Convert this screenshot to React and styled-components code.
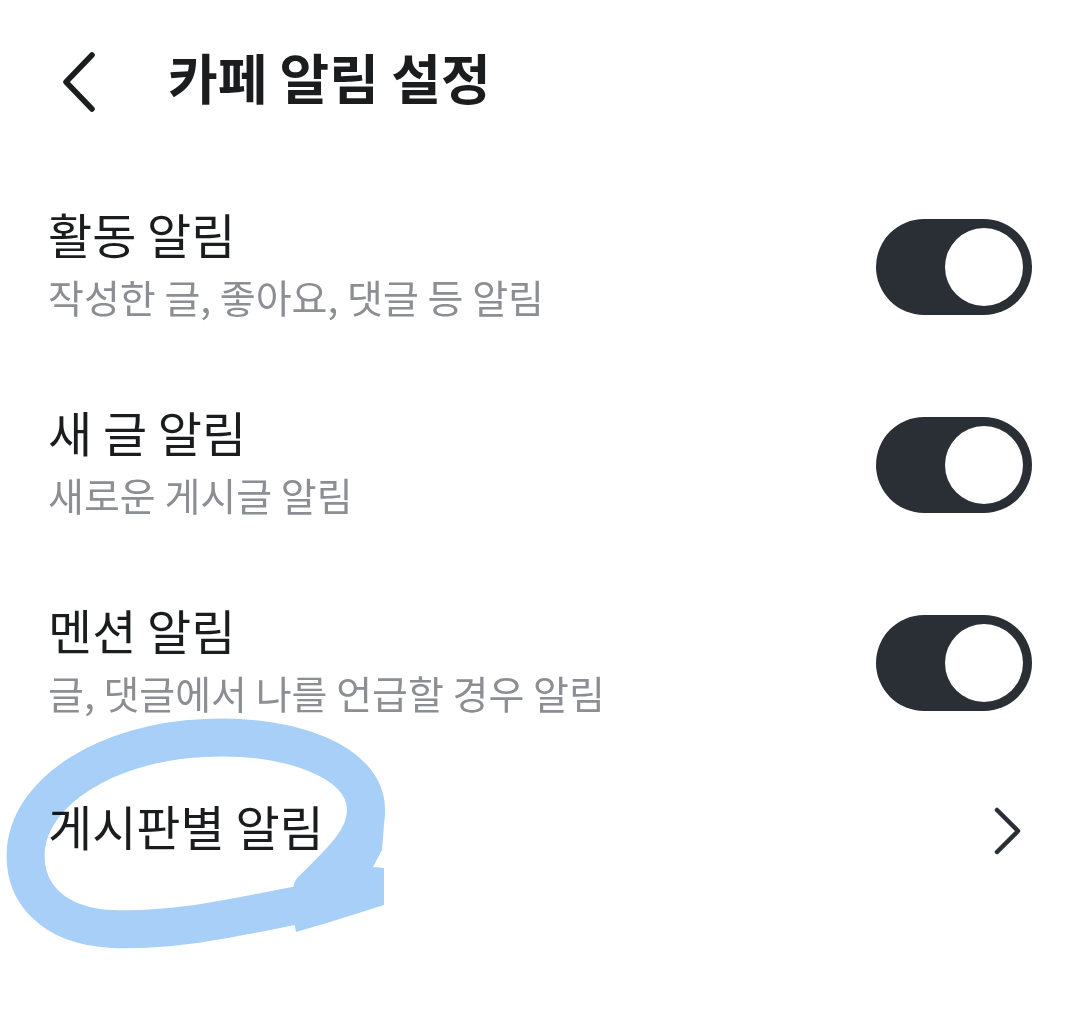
import React, { useState } from 'react'
import styled, { createGlobalStyle } from 'styled-components'

const GlobalStyle = createGlobalStyle`
  html, body {
    margin: 0;
    padding: 0;
    background: #ffffff;
  }
  body {
    font-family: "Noto Sans CJK KR", "Noto Sans", sans-serif;
    color: #1b1c1e;
  }
`

const Page = styled.div`
  position: relative;
  width: 1080px;
  height: 1033px;
  background: #fff;
  overflow: hidden;
`

const Header = styled.header`
  height: 164px;
  display: flex;
  align-items: center;
  padding-left: 56px;
`

const BackButton = styled.button`
  width: 112px;
  height: 64px;
  padding: 0;
  border: 0;
  background: none;
  display: flex;
  align-items: center;
  cursor: pointer;
`

const Title = styled.h1`
  margin: 0 0 10px;
  font-size: 54px;
  font-weight: 700;
  line-height: 64px;
  color: #1b1c1e;
`

const List = styled.ul`
  list-style: none;
  margin: 0;
  padding: 4px 48px 0;
`

const Row = styled.li`
  height: ${p => (p.$link ? 138 : 198)}px;
  display: flex;
  align-items: center;
  justify-content: space-between;
`

const Texts = styled.div`
  display: flex;
  flex-direction: column;
  gap: 8px;
  margin-bottom: 10px;
`

const ItemTitle = styled.span`
  font-size: 48px;
  line-height: 60px;
  color: #1b1c1e;
  margin-bottom: ${p => (p.$link ? 12 : 0)}px;
`

const ItemSub = styled.span`
  font-size: 39px;
  line-height: 50px;
  color: #8b8e92;
`

const Toggle = styled.button`
  width: 156px;
  height: 96px;
  border: 0;
  border-radius: 48px;
  padding: 0 9px;
  background: ${p => (p.$on ? '#2a2f36' : '#d4d6d9')};
  display: flex;
  align-items: center;
  justify-content: ${p => (p.$on ? 'flex-end' : 'flex-start')};
  cursor: pointer;
`

const Knob = styled.span`
  width: 78px;
  height: 78px;
  border-radius: 50%;
  background: #fff;
`

const Annotation = styled.svg`
  position: absolute;
  left: 0;
  top: 0;
  pointer-events: none;
  mix-blend-mode: multiply;
`

const BackIcon = () => (
  <svg width="40" height="60" viewBox="0 0 40 60">
    <path d="M36 3 L10 30 L36 57" fill="none" stroke="#1b1c1e" strokeWidth="5.5" strokeLinecap="round" strokeLinejoin="round" />
  </svg>
)

const ChevronRight = () => (
  <svg width="40" height="52" viewBox="0 0 40 52" style={{ marginRight: 4 }}>
    <path d="M9 5 L30 26 L9 47" fill="none" stroke="#2a2f36" strokeWidth="4.5" strokeLinecap="round" strokeLinejoin="round" />
  </svg>
)

const items = [
  { title: '활동 알림', sub: '작성한 글, 좋아요, 댓글 등 알림' },
  { title: '새 글 알림', sub: '새로운 게시글 알림' },
  { title: '멘션 알림', sub: '글, 댓글에서 나를 언급할 경우 알림' },
]

export default function App() {
  const [on, setOn] = useState([true, true, true])

  const flip = (i) => setOn(prev => prev.map((v, j) => (j === i ? !v : v)))

  return (
    <Page>
      <GlobalStyle />
      <Header>
        <BackButton aria-label="뒤로">
          <BackIcon />
        </BackButton>
        <Title>카페 알림 설정</Title>
      </Header>
      <List>
        {items.map((item, i) => (
          <Row key={item.title}>
            <Texts>
              <ItemTitle>{item.title}</ItemTitle>
              <ItemSub>{item.sub}</ItemSub>
            </Texts>
            <Toggle $on={on[i]} onClick={() => flip(i)} aria-label={item.title}>
              <Knob />
            </Toggle>
          </Row>
        ))}
        <Row $link>
          <ItemTitle $link>게시판별 알림</ItemTitle>
          <ChevronRight />
        </Row>
      </List>

      {/* hand-drawn highlight over the last row */}
      <Annotation width="1080" height="1033" viewBox="0 0 1080 1033">
        <g fill="none" stroke="#a8cff8" strokeWidth="38" strokeLinecap="round" strokeLinejoin="round">
          <path d="M340 898 C 260 910, 190 932, 112 929 C 52 926, 22 892, 26 848 C 32 790, 108 742, 205 738 C 292 734, 366 762, 366 810 C 366 840, 340 862, 312 890" />
        </g>
        <polygon fill="#a8cff8" points="298,884 340,846 366,812 385,812 382,850 373,867 384,868 384,905 330,922 296,932 290,900" />
      </Annotation>
    </Page>
  )
}
